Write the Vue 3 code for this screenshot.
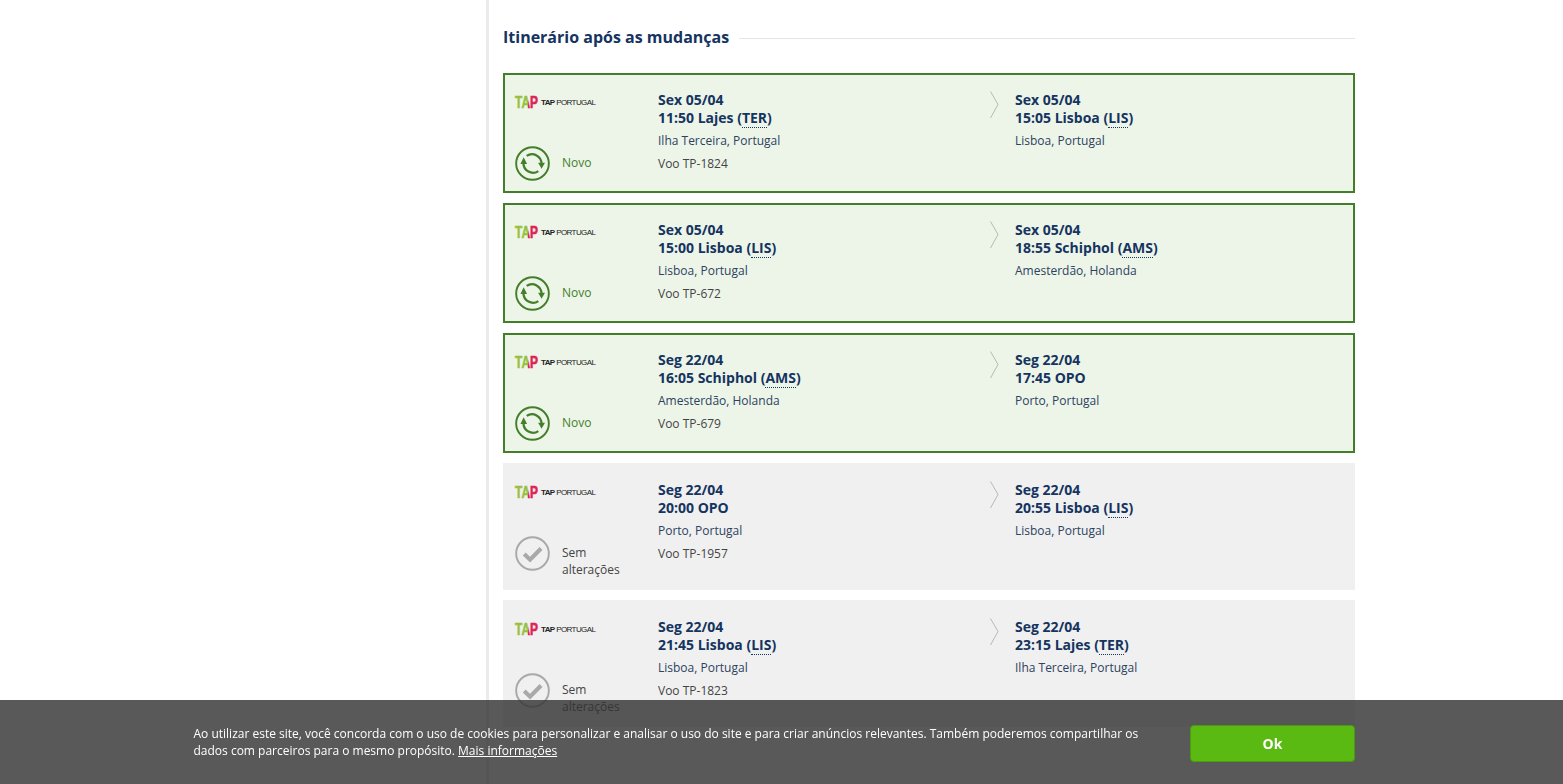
<script setup>
const segments = [
  { state: 'new', label: 'Novo', date: 'Sex 05/04', time: '11:50', city: 'Lajes', code: 'TER', place: 'Ilha Terceira, Portugal', flight: 'Voo TP-1824', date2: 'Sex 05/04', time2: '15:05', city2: 'Lisboa', code2: 'LIS', place2: 'Lisboa, Portugal' },
  { state: 'new', label: 'Novo', date: 'Sex 05/04', time: '15:00', city: 'Lisboa', code: 'LIS', place: 'Lisboa, Portugal', flight: 'Voo TP-672', date2: 'Sex 05/04', time2: '18:55', city2: 'Schiphol', code2: 'AMS', place2: 'Amesterdão, Holanda' },
  { state: 'new', label: 'Novo', date: 'Seg 22/04', time: '16:05', city: 'Schiphol', code: 'AMS', place: 'Amesterdão, Holanda', flight: 'Voo TP-679', date2: 'Seg 22/04', time2: '17:45', city2: '', code2: 'OPO', place2: 'Porto, Portugal' },
  { state: 'same', label: 'Sem alterações', date: 'Seg 22/04', time: '20:00', city: '', code: 'OPO', place: 'Porto, Portugal', flight: 'Voo TP-1957', date2: 'Seg 22/04', time2: '20:55', city2: 'Lisboa', code2: 'LIS', place2: 'Lisboa, Portugal' },
  { state: 'same', label: 'Sem alterações', date: 'Seg 22/04', time: '21:45', city: 'Lisboa', code: 'LIS', place: 'Lisboa, Portugal', flight: 'Voo TP-1823', date2: 'Seg 22/04', time2: '23:15', city2: 'Lajes', code2: 'TER', place2: 'Ilha Terceira, Portugal' }
]
</script>

<template>
  <div class="page">
    <aside class="side"></aside>
    <main class="main">
      <div class="heading">
        <h2>Itinerário após as mudanças</h2>
        <span class="rule"></span>
      </div>
      <ul class="list">
        <li v-for="(s, i) in segments" :key="i" class="card" :class="s.state">
          <div class="status">
            <div class="logo">
              <svg class="mark" viewBox="0 0 24 15" width="24" height="15">
                <defs>
                  <linearGradient :id="'tap' + i" gradientUnits="userSpaceOnUse" x1="0" y1="0" x2="34" y2="0">
                    <stop offset="0.56" stop-color="#96bf42" />
                    <stop offset="0.56" stop-color="#dc2350" />
                  </linearGradient>
                </defs>
                <text transform="scale(.7 1)" x="0" y="13" :fill="'url(#tap' + i + ')'" :stroke="'url(#tap' + i + ')'" stroke-width=".6">TAP</text>
              </svg>
              <span class="brand"><b>TAP</b> PORTUGAL</span>
            </div>
            <div class="state">
              <svg v-if="s.state === 'new'" class="icon" viewBox="0 0 36 36" width="35" height="35">
                <circle cx="18" cy="18" r="16.8" fill="none" stroke="#437f29" stroke-width="2" />
                <path d="M8.7 17.5A9.8 9.8 0 0 0 24 25.8" fill="none" stroke="#437f29" stroke-width="2.3" />
                <path d="M27.3 18.5A9.8 9.8 0 0 0 12 10.2" fill="none" stroke="#437f29" stroke-width="2.3" />
                <path d="M5.6 18.5 8.9 11.6 12.4 18.5Z" fill="#437f29" />
                <path d="M23.8 17.3 30.8 17.3 27.3 23.4Z" fill="#437f29" />
              </svg>
              <svg v-else class="icon" viewBox="0 0 36 36" width="35" height="35">
                <circle cx="18" cy="18" r="16.8" fill="none" stroke="#a9a9a9" stroke-width="2" />
                <path d="M9.5 18.5 15.5 24.3 26.8 12.8" fill="none" stroke="#a9a9a9" stroke-width="4.2" />
              </svg>
              <span class="label">{{ s.label }}</span>
            </div>
          </div>
          <div class="leg origin">
            <div class="strong">{{ s.date }}</div>
            <div class="strong">{{ s.time }} <template v-if="s.city">{{ s.city }} (<abbr>{{ s.code }}</abbr>)</template><template v-else>{{ s.code }}</template></div>
            <div class="place">{{ s.place }}</div>
            <div class="flight">{{ s.flight }}</div>
            <svg class="chevron" viewBox="0 0 9 28" width="9" height="28">
              <path d="M.5.5 8 13.5.5 27" fill="none" stroke="#b5b9b5" stroke-width="1" />
            </svg>
          </div>
          <div class="leg">
            <div class="strong">{{ s.date2 }}</div>
            <div class="strong">{{ s.time2 }} <template v-if="s.city2">{{ s.city2 }} (<abbr>{{ s.code2 }}</abbr>)</template><template v-else>{{ s.code2 }}</template></div>
            <div class="place">{{ s.place2 }}</div>
          </div>
        </li>
      </ul>
    </main>
    <div class="cookie">
      <p>Ao utilizar este site, você concorda com o uso de cookies para personalizar e analisar o uso do site e para criar anúncios relevantes. Também poderemos compartilhar os dados com parceiros para o mesmo propósito. <a href="#">Mais informações</a></p>
      <button type="button">Ok</button>
    </div>
  </div>
</template>

<style>
html, body { margin: 0; height: 100%; overflow: hidden; background: #fff; }
</style>

<style scoped>
.page {
  display: flex;
  height: 784px;
  overflow: hidden;
  font-family: "Open Sans", sans-serif;
  color: #15345f;
}
.side {
  width: 486px;
  flex: none;
  border-right: 3px solid #ebebeb;
  box-sizing: content-box;
}
.main {
  width: 852px;
  margin-left: 14px;
  flex: none;
  padding-top: 25px;
}
.heading {
  display: flex;
  align-items: center;
  gap: 10px;
  height: 24px;
}
.heading h2 {
  margin: 0;
  font-size: 16px;
  line-height: 24px;
  font-weight: 700;
  white-space: nowrap;
  color: #15345f;
}
.rule {
  flex: 1;
  height: 1px;
  margin-top: 3px;
  background: #e4e4e4;
}
.list {
  list-style: none;
  margin: 24px 0 0;
  padding: 0;
  display: flex;
  flex-direction: column;
  gap: 10px;
}
.card {
  display: grid;
  grid-template-columns: 153px 357px 1fr;
  box-sizing: border-box;
  min-height: 120px;
  padding: 18px 0 0;
}
.card.new {
  height: 120px;
  background: #edf5e9;
  border: 2px solid #437f29;
  padding: 16px 0 0;
}
.card.new .status { padding-left: 10px; }
.card.same {
  height: 127px;
  background: #f0f0f0;
  padding-left: 12px;
  grid-template-columns: 143px 357px 1fr;
}
.logo {
  display: flex;
  align-items: center;
  height: 15px;
  margin-top: 4px;
}
.mark {
  flex: none;
  overflow: visible;
  font-family: "Liberation Sans", sans-serif;
  font-size: 17px;
  font-weight: 700;
}
.brand {
  margin-left: 2px;
  font-family: "Liberation Sans", sans-serif;
  font-size: 8px;
  line-height: 15px;
  color: #222;
  letter-spacing: -.6px;
  white-space: nowrap;
}
.brand b { font-weight: 700; }
.state {
  display: flex;
  align-items: flex-start;
  margin-top: 36px;
}
.icon { flex: none; }
.label {
  margin: 8px 0 0 12px;
  width: 70px;
  font-size: 12px;
  line-height: 17px;
}
.new .label { color: #437f29; }
.same .label { color: #444; }
.leg { position: relative; font-size: 12px; }
.strong {
  font-size: 14px;
  line-height: 18px;
  font-weight: 700;
  color: #15345f;
}
abbr {
  text-decoration: none;
  border-bottom: 1px dotted #15345f;
}
.place {
  margin-top: 5px;
  line-height: 18px;
  color: #2c4260;
}
.flight {
  margin-top: 5px;
  line-height: 18px;
  color: #444;
}
.chevron {
  position: absolute;
  left: 332px;
  top: 0;
}
.cookie {
  position: fixed;
  left: 0;
  right: 0;
  bottom: 0;
  height: 84px;
  box-sizing: border-box;
  padding: 0 208px 0 193.5px;
  display: flex;
  align-items: center;
  justify-content: space-between;
  background: rgba(51, 51, 51, .81);
  color: #fff;
}
.cookie p {
  margin: 0;
  width: 960px;
  font-size: 12px;
  line-height: 17px;
}
.cookie a { color: #fff; text-decoration: underline; }
.cookie button {
  width: 165px;
  height: 37px;
  margin-top: 3px;
  border: 1px solid #4c9a10;
  border-radius: 4px;
  background: #5bba12;
  color: #fff;
  font-family: inherit;
  font-size: 14px;
  font-weight: 700;
}
</style>
